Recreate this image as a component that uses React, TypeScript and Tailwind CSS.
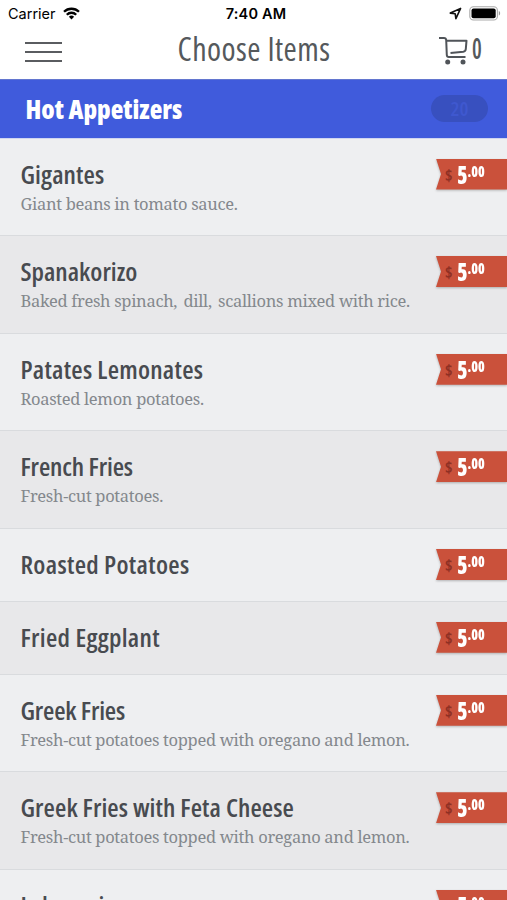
type Item = { name: string; description?: string; tracking?: string };

const items: Item[] = [
  { name: "Gigantes", description: "Giant beans in tomato sauce.", tracking: "tracking-[0.1px]" },
  { name: "Spanakorizo", description: "Baked fresh spinach,\u2009 dill,\u2009 scallions mixed with rice." },
  { name: "Patates Lemonates", description: "Roasted lemon potatoes.", tracking: "tracking-[0.24px]" },
  { name: "French Fries", description: "Fresh-cut potatoes.", tracking: "tracking-[-0.16px]" },
  { name: "Roasted Potatoes", tracking: "tracking-[0.3px]" },
  { name: "Fried Eggplant", tracking: "tracking-[0.3px]" },
  { name: "Greek Fries", description: "Fresh-cut potatoes topped with oregano and lemon.", tracking: "tracking-[-0.2px]" },
  {
    name: "Greek Fries with Feta Cheese",
    description: "Fresh-cut potatoes topped with oregano and lemon.",
    tracking: "tracking-[0.08px]",
  },
  { name: "Lahanorizo", description: "Cabbage with rice." },
];

function StatusBar() {
  return (
    <div className="grid h-7 shrink-0 grid-cols-3 items-center pl-2 pr-[6px] font-['Inter',sans-serif] text-black">
      <div className="flex items-center gap-[7px]">
        <span className="text-[14.5px]">Carrier</span>
        <svg className="-mt-0.5" width="17" height="13" viewBox="0 0 17 13" fill="none" stroke="#000" strokeWidth="2.3">
          <path d="M1 4.8a10.7 10.7 0 0 1 15 0" />
          <path d="M3.8 7.7a6.7 6.7 0 0 1 9.4 0" />
          <path d="M8.5 12.4 5.9 9.7a3.8 3.8 0 0 1 5.2 0Z" fill="#000" stroke="none" />
        </svg>
      </div>
      <span className="pl-[3px] text-center text-[14.5px] font-semibold tracking-[0.2px]">7:40 AM</span>
      <div className="-mt-0.5 flex items-center justify-end gap-[7px]">
        <svg width="13" height="13" viewBox="0 0 13 13" fill="none" stroke="#111" strokeWidth="1.6" strokeLinejoin="round">
          <path d="M11.6 1.4 1.3 6.1l4.9.7.7 4.9Z" />
        </svg>
        <svg width="32" height="15" viewBox="0 0 32 15">
          <rect x="0.8" y="0.8" width="27.6" height="13.2" rx="3.6" fill="#fff" stroke="#aaa" strokeWidth="1.1" />
          <rect x="2.5" y="2.5" width="24.2" height="9.8" rx="2" fill="#000" />
          <path d="M29.8 5v4.6c1.8-.6 1.8-4 0-4.6Z" fill="#999" />
        </svg>
      </div>
    </div>
  );
}

function NavBar() {
  return (
    <div className="grid h-[51px] shrink-0 grid-cols-[1fr_auto_1fr] items-start pl-[25px] pr-[24px] text-[#55595c]">
      <div className="mt-[14px] flex w-[37px] flex-col gap-[6.5px]">
        <div className="h-[2.3px] bg-[#5a5c60]" />
        <div className="h-[2.3px] bg-[#5a5c60]" />
        <div className="h-[2.3px] bg-[#5a5c60]" />
      </div>
      <h1 className="text-[32px] leading-[42px] font-normal tracking-[0.45px] whitespace-nowrap">Choose Items</h1>
      <div className="flex items-start justify-end gap-[4px]">
        <svg className="-mr-px mt-2" width="30" height="29" viewBox="0 0 30 29" fill="none" stroke="#505459" strokeWidth="2" strokeLinejoin="round">
          <path d="M0 2h5q2 0 2.200 2l.6 15q.1 2 2 2H26.500" />
          <path d="M7.300 4.700H27.500L26.800 13q-.2 2.300-2.500 2.700L11.500 17" />
          <circle cx="8.700" cy="26" r="2.500" fill="#505459" stroke="none" />
          <circle cx="24" cy="26" r="2.500" fill="#505459" stroke="none" />
        </svg>
        <span className="w-[11px] origin-left scale-x-[0.78] text-[28px] leading-[41px] font-semibold">0</span>
      </div>
    </div>
  );
}

function PriceTag() {
  return (
    <div className="mt-[20px] h-8 w-[71px] shrink-0 drop-shadow-[0_1px_1px_rgba(0,0,0,0.25)]">
      <div className="flex h-[31px] items-start bg-[#ca513b] pl-[9px] [clip-path:polygon(0_0,100%_0,100%_100%,0_100%,5px_50%)]">
        <span className="mt-[7px] text-base leading-[18px] font-bold text-[#8f3024]">$</span>
        <div className="ml-[4px] flex origin-left scale-x-[0.85] items-start font-extrabold text-white">
          <span className="text-[25px] leading-[31px]">5</span>
          <span className="mt-[2px] text-base leading-[20px]">.00</span>
        </div>
      </div>
    </div>
  );
}

function MenuRow({ item }: { item: Item }) {
  return (
    <li
      className={`flex shrink-0 justify-between border-b border-[#d9dbde] pl-[20.500px] odd:bg-[#eeeff1] even:bg-[#e8e8ea] ${
        item.description ? "h-[97.600px]" : "h-[72.900px]"
      }`}
    >
      <div className="pt-[18px]">
        <h3 className={`text-[26px] leading-[34px] font-semibold whitespace-nowrap text-[#484b50] ${item.tracking ?? ""}`}>
          {item.name}
        </h3>
        {item.description && (
          <p className="font-['Noto_Serif','Liberation_Serif',serif] text-[16.500px] leading-[25px] font-normal tracking-[-0.320px] whitespace-nowrap text-[#84888d]">
            {item.description}
          </p>
        )}
      </div>
      <PriceTag />
    </li>
  );
}

export default function App() {
  return (
    <div className="flex h-[900px] w-[507px] flex-col overflow-hidden bg-white font-['Open_Sans',sans-serif] [font-stretch:75%]">
      <StatusBar />
      <NavBar />
      <div className="flex h-[59.500px] shrink-0 items-center justify-between border-t border-b border-t-[#6376cf] border-b-[#cfd6f0] bg-[#405bdc] pr-[19px] pl-[25.500px]">
        <h2 className="text-[26px] leading-8 font-extrabold text-white">Hot Appetizers</h2>
        <span className="flex h-[27px] w-[57px] items-center justify-center rounded-full bg-[#3850bf] text-[20px] font-semibold text-[#3f58cf]">
          20
        </span>
      </div>
      <ul className="flex flex-col">
        {items.map((item) => (
          <MenuRow key={item.name} item={item} />
        ))}
      </ul>
    </div>
  );
}
